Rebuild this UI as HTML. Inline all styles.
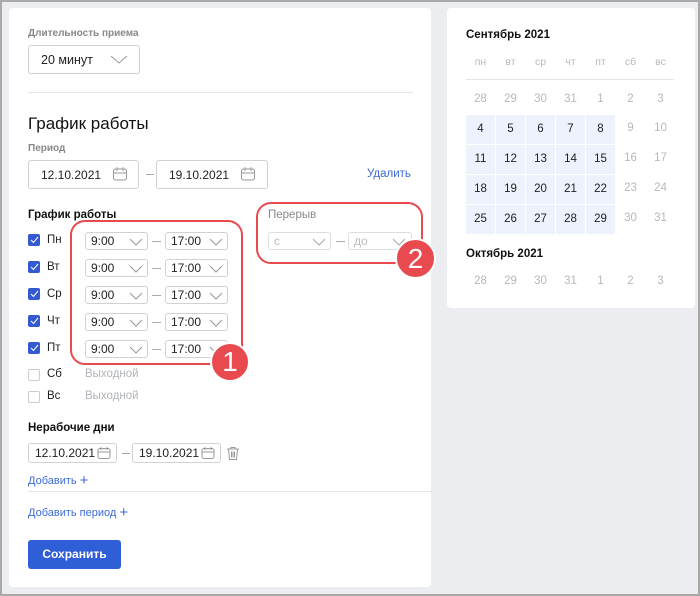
<!DOCTYPE html><html><head><meta charset="utf-8"><style>
*{box-sizing:border-box;margin:0;padding:0}
body{width:700px;height:596px;background:#ebedf0;font-family:"Liberation Sans",sans-serif;position:relative;overflow:hidden;border:2px solid #a9a9a9;}
.a{position:absolute}
.card{background:#fff;border-radius:4px}
.lbl{font-size:10px;color:#888;font-weight:bold}
.inp{border:1px solid #cfd2d6;border-radius:3px;background:#fff;font-size:12px;color:#222}
.t{font-size:11.5px;color:#222}
.ch{width:12px;height:12px;border-radius:2px}
.on{background:#3559d1}
.off{border:1px solid #c9ccd0;background:#fff}
.cell{width:29px;height:29px;background:#edf2fd;text-align:center;line-height:29px;font-size:11.5px;color:#222}
.g{color:#b5b8bd;font-size:11.5px;text-align:center;width:29px}
.blue{color:#3b6ad8;font-size:11px}
</style></head><body>
<div class="a card" style="left:7px;top:6px;width:422px;height:579px"></div>
<div class="a card" style="left:445px;top:6px;width:248px;height:300px"></div>

<div class="a lbl" style="left:26px;top:26px">Длительность приема</div>
<div class="a inp" style="left:26px;top:43px;width:112px;height:29px;padding:7px 12px;font-size:12.5px">20 минут</div>
<svg class="a" style="left:108px;top:53px" width="18" height="10"><path d="M1 1l8 7 8-7" fill="none" stroke="#999" stroke-width="1"/></svg>
<div class="a" style="left:26px;top:90px;width:385px;height:1px;background:#e3e5e8"></div>
<div class="a" style="left:26px;top:112px;font-size:17px;color:#111">График работы</div>
<div class="a lbl" style="left:26px;top:141px">Период</div>
<div class="a inp" style="left:26px;top:158px;width:111px;height:29px;padding:7px 12px">12.10.2021</div>
<div class="a" style="left:144px;top:172px;width:8px;height:1px;background:#aaa"></div>
<div class="a inp" style="left:154px;top:158px;width:112px;height:29px;padding:7px 12px">19.10.2021</div>
<svg class="a" style="left:110px;top:164px" width="16" height="16"><rect x="1.5" y="3" width="13" height="11" rx="2" fill="none" stroke="#999"/><path d="M1.5 7h13M5 1v4M11 1v4" stroke="#999"/></svg>
<svg class="a" style="left:238px;top:164px" width="16" height="16"><rect x="1.5" y="3" width="13" height="11" rx="2" fill="none" stroke="#999"/><path d="M1.5 7h13M5 1v4M11 1v4" stroke="#999"/></svg>
<div class="a blue" style="left:365px;top:166px;font-size:11.5px">Удалить</div>

<div class="a" style="left:26px;top:207px;font-size:11.5px;font-weight:bold;color:#111">График работы</div>
<div id="rows"></div>
<script>
var d=['Пн','Вт','Ср','Чт','Пт'],h='';
for(var i=0;i<5;i++){var y=230+i*27;
h+='<div class="a ch on" style="left:26px;top:'+(y+2)+'px"></div><svg class="a" style="left:28px;top:'+(y+4)+'px" width="9" height="8"><path d="M1 4l2.5 2.5L8 1" fill="none" stroke="#fff" stroke-width="1"/></svg>';
h+='<div class="a t" style="left:45px;top:'+(y+2)+'px">'+d[i]+'</div>';
h+='<div class="a inp" style="left:83px;top:'+y+'px;width:63px;height:18px;padding:1px 5px">9:00</div>';
h+='<svg class="a" style="left:127px;top:'+(y+6)+'px" width="14" height="8"><path d="M1 1l6 6 6-6" fill="none" stroke="#999"/></svg>';
h+='<div class="a" style="left:150px;top:'+(y+9)+'px;width:9px;height:1px;background:#aaa"></div>';
h+='<div class="a inp" style="left:163px;top:'+y+'px;width:63px;height:18px;padding:1px 5px">17:00</div>';
h+='<svg class="a" style="left:207px;top:'+(y+6)+'px" width="14" height="8"><path d="M1 1l6 6 6-6" fill="none" stroke="#999"/></svg>';}
[['Сб',365],['Вс',387]].forEach(function(r){h+='<div class="a ch off" style="left:26px;top:'+(r[1]+2)+'px"></div><div class="a t" style="left:45px;top:'+(r[1]+1)+'px">'+r[0]+'</div><div class="a" style="left:83px;top:'+(r[1]+1)+'px;font-size:11.5px;color:#b0b3b8">Выходной</div>';});
document.getElementById('rows').innerHTML=h;
</script>
<div class="a" style="left:266px;top:207px;font-size:11.5px;color:#888">Перерыв</div>
<div class="a inp" style="left:266px;top:230px;width:63px;height:18px;padding:1px 5px;color:#bbb;border-color:#ddd">с</div>
<svg class="a" style="left:310px;top:236px" width="14" height="8"><path d="M1 1l6 6 6-6" fill="none" stroke="#aaa"/></svg>
<div class="a" style="left:334px;top:239px;width:9px;height:1px;background:#aaa"></div>
<div class="a inp" style="left:346px;top:230px;width:64px;height:18px;padding:1px 5px;color:#bbb;border-color:#ddd">до</div>
<svg class="a" style="left:390px;top:236px" width="14" height="8"><path d="M1 1l6 6 6-6" fill="none" stroke="#aaa"/></svg>

<div class="a" style="left:68px;top:218px;width:173px;height:145px;border:2px solid #e84a4f;border-radius:15px"></div>
<div class="a" style="left:254px;top:200px;width:167px;height:62px;border:2px solid #e84a4f;border-radius:15px"></div>
<div class="a" style="left:208px;top:340px;width:40px;height:40px;border-radius:50%;background:#e84a4f;border:2px solid #fff;color:#fff;font-size:28px;text-align:center;line-height:36px">1</div>
<div class="a" style="left:393px;top:236px;width:41px;height:41px;border-radius:50%;background:#e84a4f;border:2px solid #fff;color:#fff;font-size:28px;text-align:center;line-height:37px">2</div>

<div class="a" style="left:26px;top:420px;font-size:11.5px;font-weight:bold;color:#111">Нерабочие дни</div>
<div class="a inp" style="left:26px;top:441px;width:89px;height:20px;padding:2px 6px">12.10.2021</div>
<div class="a" style="left:120px;top:451px;width:8px;height:1px;background:#aaa"></div>
<div class="a inp" style="left:130px;top:441px;width:89px;height:20px;padding:2px 6px">19.10.2021</div>
<svg class="a" style="left:95px;top:444px" width="14" height="14"><rect x="1" y="2.5" width="12" height="10" rx="2" fill="none" stroke="#999"/><path d="M1 6h12M4 1v3M10 1v3" stroke="#999"/></svg>
<svg class="a" style="left:199px;top:444px" width="14" height="14"><rect x="1" y="2.5" width="12" height="10" rx="2" fill="none" stroke="#999"/><path d="M1 6h12M4 1v3M10 1v3" stroke="#999"/></svg>
<svg class="a" style="left:224px;top:444px" width="14" height="15"><path d="M1 3h12M5 3V1.5h4V3M2.5 3l1 10.5h7l1-10.5M5.5 5.5v6M7 5.5v6M8.5 5.5v6" fill="none" stroke="#999"/></svg>
<div class="a blue" style="left:26px;top:469px">Добавить <span style="font-size:15px;position:relative;top:1px">+</span></div>
<div class="a" style="left:26px;top:489px;width:404px;height:1px;background:#e3e5e8"></div>
<div class="a blue" style="left:26px;top:501px">Добавить период <span style="font-size:15px;position:relative;top:1px">+</span></div>
<div class="a" style="left:26px;top:538px;width:93px;height:29px;background:#2f5fd6;border-radius:3px;color:#fff;font-size:12px;font-weight:bold;text-align:center;line-height:29px">Сохранить</div>

<div class="a" style="left:464px;top:27px;font-size:11.5px;font-weight:bold;color:#111">Сентябрь 2021</div>
<div class="a" style="left:464px;top:77px;width:208px;height:1px;background:#e3e5e8"></div>
<div class="a" style="left:464px;top:246px;font-size:11.5px;font-weight:bold;color:#111">Октябрь 2021</div>
<div id="cal"></div>
<script>
var c='',wd=['пн','вт','ср','чт','пт','сб','вс'];
function X(i){return 464+i*30}
wd.forEach(function(w,i){c+='<div class="a g" style="left:'+X(i)+'px;top:54px;font-size:10.5px">'+w+'</div>'});
[28,29,30,31,1,2,3].forEach(function(n,i){c+='<div class="a g" style="left:'+X(i)+'px;top:91px">'+n+'</div>';c+='<div class="a g" style="left:'+X(i)+'px;top:273px">'+n+'</div>'});
for(var r=0;r<4;r++)for(var i=0;i<7;i++){var n=4+r*7+i,y=113+r*30;
if(i<5)c+='<div class="a cell" style="left:'+X(i)+'px;top:'+y+'px">'+n+'</div>';
else c+='<div class="a g" style="left:'+X(i)+'px;top:'+(y+7)+'px">'+n+'</div>';}
document.getElementById('cal').innerHTML=c;
</script>
</body></html>
